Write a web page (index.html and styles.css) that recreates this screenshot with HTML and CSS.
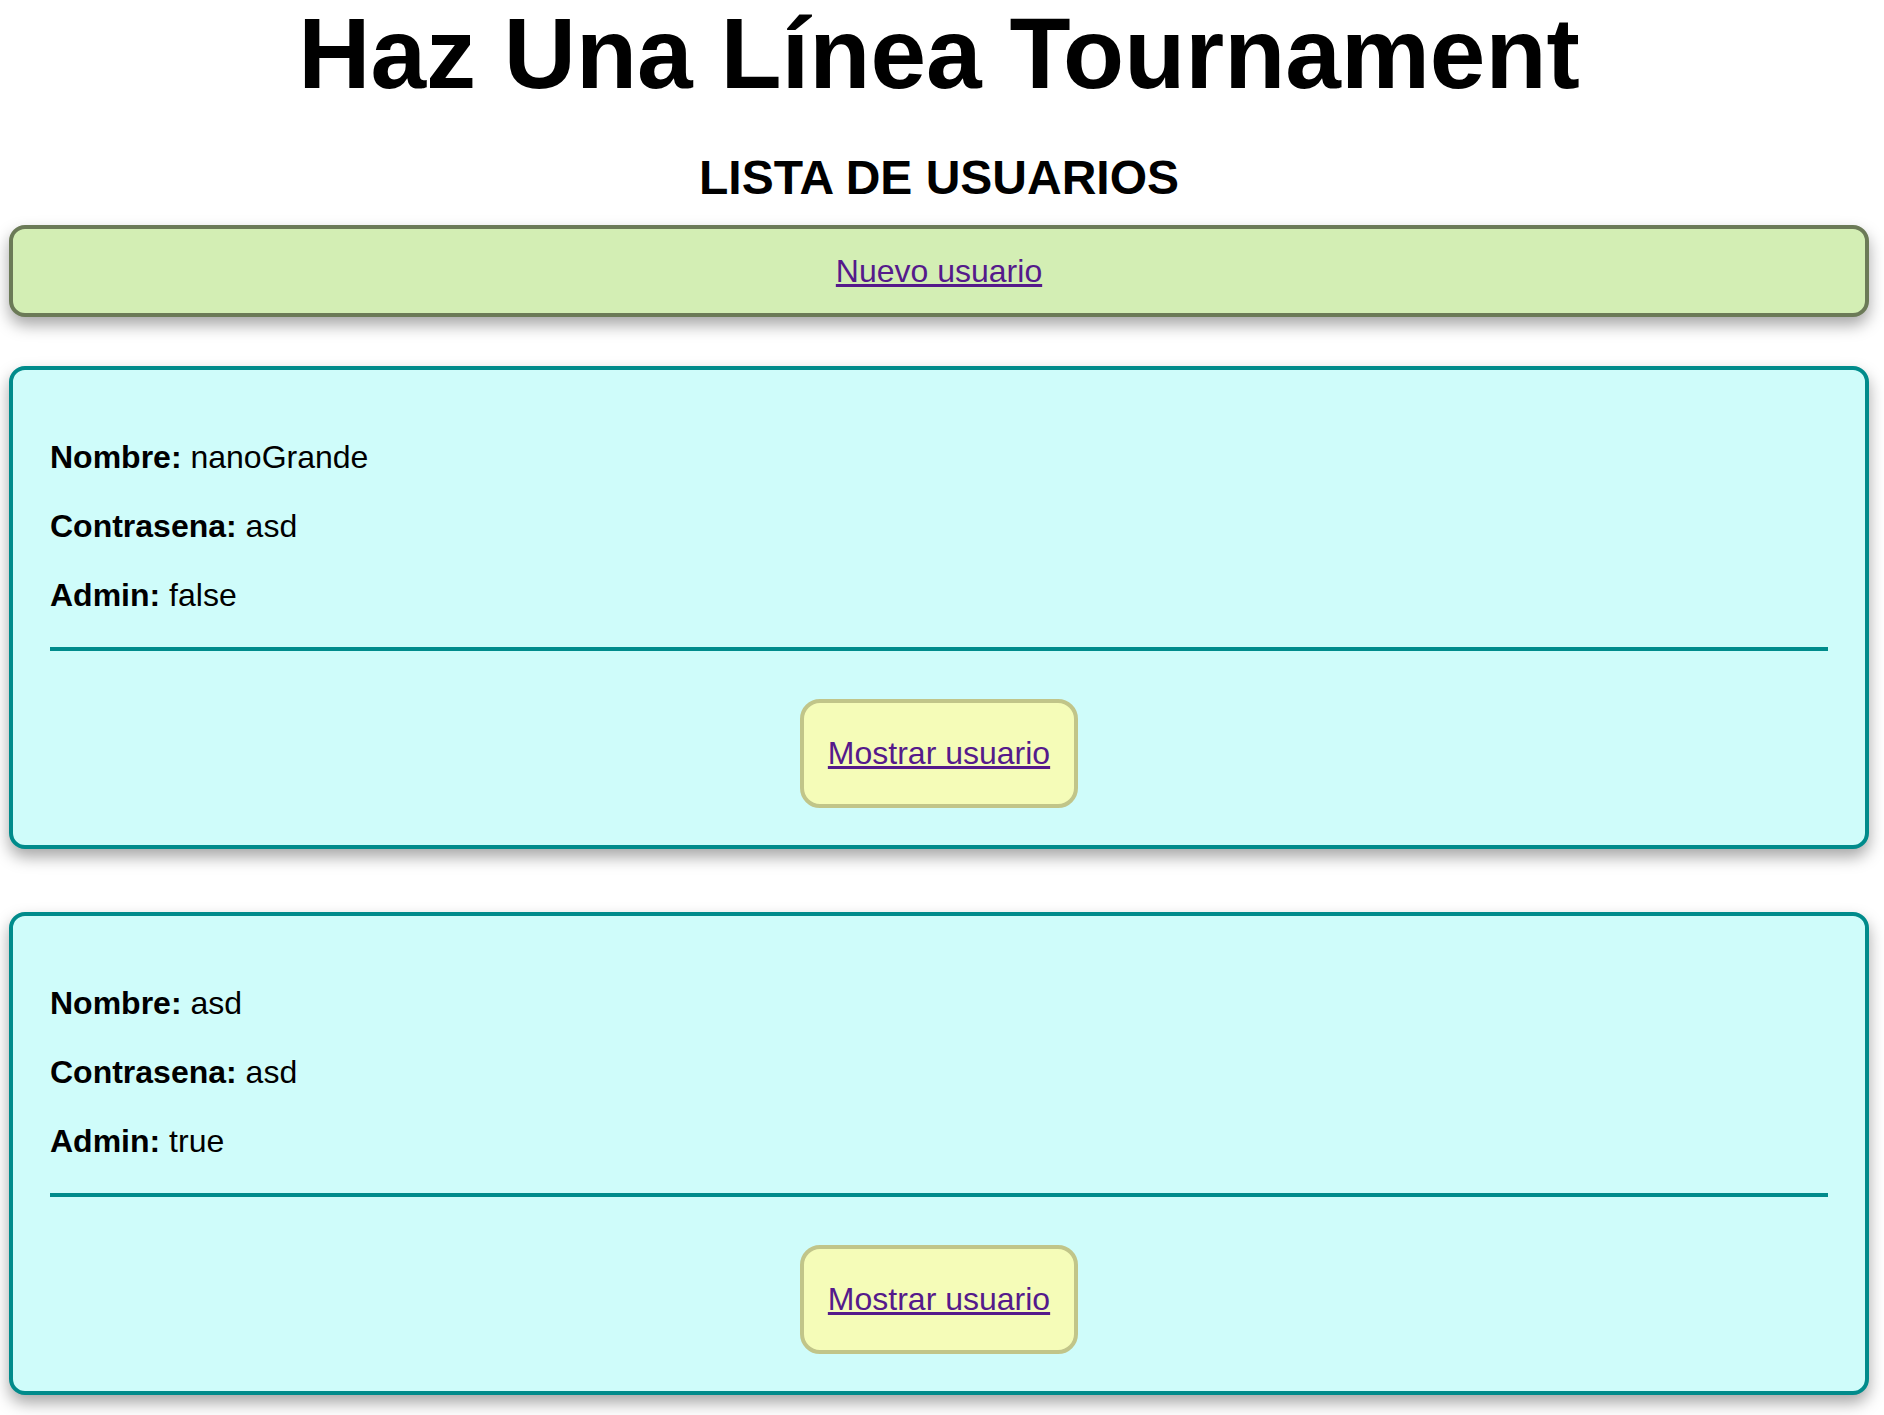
FILE: index.html
```html
<!DOCTYPE html>
<html lang="es">
<head>
<meta charset="utf-8">
<title>Haz Una Línea Tournament</title>
<link rel="stylesheet" href="styles.css">
</head>
<body>
<div class="page">
  <h1 class="title">Haz Una Línea Tournament</h1>
  <h2 class="subtitle">LISTA DE USUARIOS</h2>
  <div class="new-box">
    <a class="link" href="#">Nuevo usuario</a>
  </div>
  <div class="card">
    <p class="row"><b>Nombre:</b> nanoGrande</p>
    <p class="row"><b>Contrasena:</b> asd</p>
    <p class="row"><b>Admin:</b> false</p>
    <hr class="sep">
    <div class="actions">
      <div class="btn"><a class="link" href="#">Mostrar usuario</a></div>
    </div>
  </div>
  <div class="card">
    <p class="row"><b>Nombre:</b> asd</p>
    <p class="row"><b>Contrasena:</b> asd</p>
    <p class="row"><b>Admin:</b> true</p>
    <hr class="sep">
    <div class="actions">
      <div class="btn"><a class="link" href="#">Mostrar usuario</a></div>
    </div>
  </div>
</div>
</body>
</html>
```

FILE: styles.css
```css
html, body {
  margin: 0;
  padding: 0;
  background: #ffffff;
}
body {
  font-family: "Liberation Sans", Arial, sans-serif;
  font-size: 32px;
  color: #000;
}
.page {
  margin: 0 15px 0 9px;
  padding-bottom: 20px;
}
.title {
  margin: 3px 0 0;
  font-size: 100px;
  line-height: 100px;
  font-weight: bold;
  text-align: center;
}
.subtitle {
  margin: 47px 0 0;
  font-size: 48px;
  line-height: 55px;
  font-weight: bold;
  text-align: center;
}
.link {
  color: #551a8b;
  text-decoration: underline;
}
.new-box {
  margin-top: 20px;
  background: #d3eeb4;
  border: 4px solid #6b7a57;
  border-radius: 16px;
  padding: 23.5px 0;
  line-height: 37px;
  text-align: center;
  box-shadow: 0 8px 16px rgba(0, 0, 0, 0.35);
}
.card {
  margin-top: 49px;
  background: #cffcfa;
  border: 4px solid #008b8b;
  border-radius: 16px;
  padding: 37px;
  box-shadow: 0 8px 16px rgba(0, 0, 0, 0.35);
}
.card + .card {
  margin-top: 63px;
}
.row {
  margin: 32px 0;
  line-height: 37px;
}
.sep {
  margin: 33px 0 0;
  border: none;
  height: 4px;
  background: #008b8b;
}
.actions {
  display: flex;
  justify-content: center;
  margin-top: 48px;
}
.btn {
  background: #f5fcb8;
  border: 4px solid #c1c589;
  border-radius: 20px;
  padding: 32px 24px;
  line-height: 37px;
}
```
